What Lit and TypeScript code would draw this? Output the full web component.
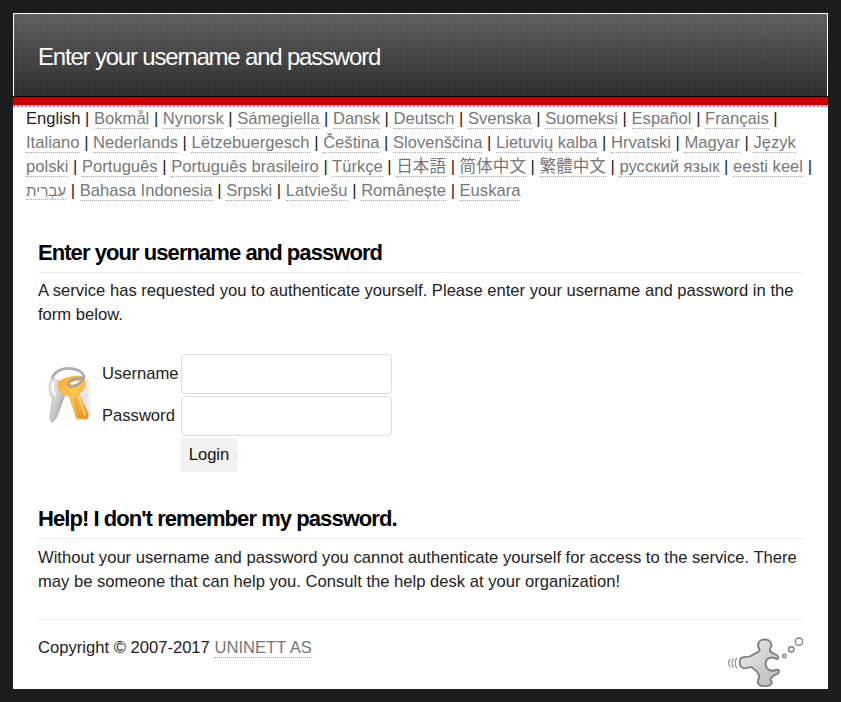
import { LitElement, html, css } from "lit";
import { customElement } from "lit/decorators.js";

const LANGS = [
  "Bokmål","Nynorsk","Sámegiella","Dansk","Deutsch","Svenska","Suomeksi","Español","Français",
  "Italiano","Nederlands","Lëtzebuergesch","Čeština","Slovenščina","Lietuvių kalba","Hrvatski","Magyar","Język polski",
  "Português","Português brasileiro","Türkçe","日本語","简体中文","繁體中文","русский язык","eesti keel","עִבְרִית",
  "Bahasa Indonesia","Srpski","Latviešu","Românește","Euskara",
];

const keyIcon = html`<svg class="keys" width="60" height="70" viewBox="0 0 180 210">
  <defs>
    <linearGradient id="g" x1="0" y1="0" x2="1" y2="1"><stop offset="0" stop-color="#f6f6f6"/><stop offset=".55" stop-color="#c8c8c8"/><stop offset="1" stop-color="#7c7c7c"/></linearGradient>
    <linearGradient id="y" x1="0" y1="0" x2="1" y2="1"><stop offset="0" stop-color="#f8a83a"/><stop offset=".45" stop-color="#fbc650"/><stop offset="1" stop-color="#e98f22"/></linearGradient>
    <filter id="b" x="-10%" y="-10%" width="120%" height="120%"><feGaussianBlur stdDeviation="1.5"/></filter>
    <filter id="s" x="-20%" y="-20%" width="140%" height="140%"><feGaussianBlur stdDeviation="5"/></filter>
  </defs>
  <g filter="url(#s)" opacity=".16"><path d="M100 60 L145 60 150 182 110 190Z" fill="#666"/></g>
  <g filter="url(#b)">
    <path d="M36 62C24 76 25 106 38 120L30 178 36 194 50 178 60 152 70 124C78 108 74 86 64 72Z" fill="url(#g)" stroke="#a4a4a4" stroke-width="2"/>
    <path d="M42 72C36 86 39 102 47 112" fill="none" stroke="#fff" stroke-width="6"/>
    <path d="M36 62C42 42 62 31 84 31 108 31 128 40 132 56" fill="none" stroke="#aeaeae" stroke-width="8"/>
    <path d="M56 70C72 60 96 54 116 54 138 54 140 84 128 98L116 108 146 168 142 183 110 182 92 130 88 115C68 114 48 96 56 70Z" fill="url(#y)" stroke="#eea338" stroke-width="1.5"/>
    <path d="M104 122L120 178" stroke="#d98a20" stroke-width="4" stroke-dasharray="5 4" fill="none"/>
    <path d="M116 116L136 172" stroke="#fddc80" stroke-width="5" fill="none"/>
    <ellipse cx="104" cy="74" rx="14" ry="4" transform="rotate(-16 104 74)" fill="#fff"/>
    <path d="M132 52C133 70 112 84 96 86 82 87 82 74 96 66 106 60 118 60 127 60" fill="none" stroke="#a2a2a2" stroke-width="7"/>
  </g>
</svg>`;

const mascot = html`<svg class="logo" width="80" height="56" viewBox="0 0 240 168">
  <defs>
    <linearGradient id="m" x1="0" y1="0" x2="1" y2="1"><stop offset="0" stop-color="#eeeeee"/><stop offset="1" stop-color="#b8b8b8"/></linearGradient>
    <filter id="mb"><feGaussianBlur stdDeviation="1"/></filter>
  </defs>
  <g filter="url(#mb)">
    <path d="M110 55C100 42 106 26 125 25 144 25 150 42 141 54 138 62 148 66 160 72 168 76 168 84 160 84 146 74 128 82 128 98 128 116 146 124 160 116 170 114 170 124 164 128 152 134 142 138 143 146 150 156 146 166 125 166 105 166 100 152 108 142 112 132 100 118 88 110 80 105 74 112 64 112 54 112 50 102 50 94 50 84 56 78 66 78 74 80 84 76 92 70 100 64 112 64 110 55Z" fill="url(#m)" stroke="#7e7e7e" stroke-width="5.5"/>
    <g fill="none" stroke="#8f8f8f" stroke-width="3.5"><path d="M42 80C35 88 35 104 42 112"/><path d="M32 82C25 90 25 102 32 110"/><path d="M22 84C16 91 16 101 22 108"/></g>
    <g fill="#fff" stroke="#808080"><circle cx="184" cy="75" r="5" stroke-width="4.5"/><circle cx="205" cy="55" r="8" stroke-width="4.5"/><circle cx="228" cy="32" r="11" stroke-width="4"/></g>
  </g>
</svg>`;

@customElement("app-root")
export class AppRoot extends LitElement {
  static styles = css`
    :host { display: block; min-height: 702px; background: #1c1c1c; font-family: "Liberation Sans", Arial, "Noto Sans CJK JP", sans-serif; font-size: 16.6px; line-height: 24px; color: #222; box-sizing: border-box; padding: 13px 13px 0; overflow: hidden; }
    .wrap { background: #fff; height: 676px; box-sizing: border-box; border-top: 1px solid #fff; display: flex; flex-direction: column; overflow: hidden; }
    header { height: 82px; flex: none; margin: 0 1px; background: repeating-conic-gradient(rgba(255,255,255,.025) 0 25%, rgba(0,0,0,.025) 0 50%) 0 0 / 3px 3px, linear-gradient(#5f5f5f, #2c2c2c); box-sizing: border-box; padding: 3px 0 0 24px; display: flex; align-items: center; }
    header h1 { margin: 0; font-size: 24px; font-weight: 400; letter-spacing: -1.19px; color: #fff; }
    .red { height: 9px; flex: none; background: #c70000; border-top: 1px solid #000; box-sizing: border-box; }
    .dots { height: 2px; flex: none; background: repeating-linear-gradient(90deg, #e8787c 0 2px, #ffd9d9 2px 4px); }
    .langs { padding: 0 0 0 13px; margin: 0 14px 0 0; height: 96px; flex: none; }
    .langs a { color: #777; border-bottom: 1px dotted #aaa; }
    .langs a.he { font-size: 15.2px; }
    main { padding: 32px 25px 0; flex: 1; }
    h2 { margin: 0; font-size: 22px; line-height: 36px; font-weight: 700; letter-spacing: -0.94px; color: #000; padding-bottom: 1px; border-bottom: 1px solid #eee; }
    p { margin: 6px 0 0; }
    .form { display: grid; grid-template-columns: 64px 79px auto; grid-template-rows: 42px 42px 34px; margin: 27px 0 0; align-items: start; }
    .keys { grid-row: 1 / span 3; grid-column: 1; margin: 4px 0 0 2px; }
    label { grid-column: 2; line-height: 40px; white-space: nowrap; }
    input { grid-column: 3; width: 211px; height: 40px; box-sizing: border-box; border: 1px solid #ddd; border-radius: 4px; background: #fff; padding: 0; margin: 0; }
    button { grid-column: 3; width: 56px; height: 34px; border: 1px solid #eee; border-radius: 3px; background: #f2f2f2; font: inherit; color: #111; padding: 0; justify-self: start; }
    .help { margin-top: 29px; }
    .help + p { margin-top: 7px; }
    footer { margin-top: 25px; border-top: 1px solid #eee; display: flex; justify-content: space-between; align-items: flex-start; padding-top: 16px; }
    footer a { color: #777; border-bottom: 1px dotted #aaa; }
    .logo { margin-top: -5px; }
  `;

  render() {
    return html`<div class="wrap">
      <header><h1>Enter your username and password</h1></header>
      <div class="red"></div><div class="dots"></div>
      <div class="langs">English ${LANGS.map((l, i) => html`| <a class=${l === "עִבְרִית" ? "he" : ""}>${l}</a>${i < LANGS.length - 1 ? " " : ""}`)}</div>
      <main>
        <h2>Enter your username and password</h2>
        <p>A service has requested you to authenticate yourself. Please enter your username and password in the form below.</p>
        <div class="form">
          ${keyIcon}
          <label>Username</label><input type="text" />
          <label>Password</label><input type="password" />
          <button>Login</button>
        </div>
        <h2 class="help">Help! I don't remember my password.</h2>
        <p>Without your username and password you cannot authenticate yourself for access to the service. There may be someone that can help you. Consult the help desk at your organization!</p>
        <footer><span>Copyright © 2007-2017 <a>UNINETT AS</a></span>${mascot}</footer>
      </main>
    </div>`;
  }
}
